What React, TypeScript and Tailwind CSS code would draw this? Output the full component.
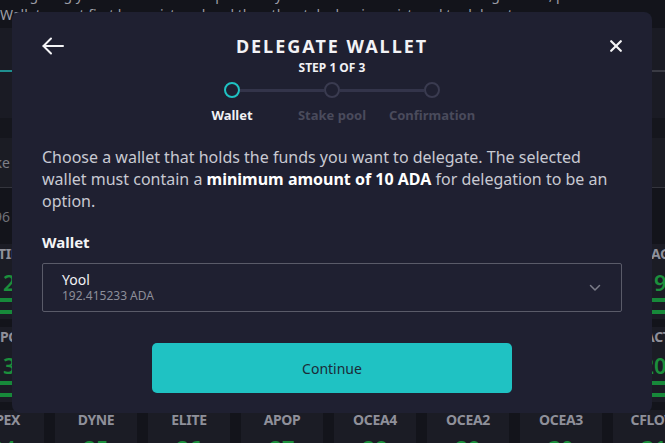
import React from "react";

const font = { fontFamily: '"Noto Sans", "Open Sans", sans-serif' };

type Tile = { label: string; num: string };

const rows: Tile[][] = [
  [
    { label: "UTIL", num: "12" },
    { label: "BLOOM", num: "13" },
    { label: "NORTH", num: "14" },
    { label: "KILN", num: "15" },
    { label: "OCEA1", num: "16" },
    { label: "STAR", num: "17" },
    { label: "HYPE", num: "18" },
    { label: "MAG", num: "19" },
  ],
  [
    { label: "NPC", num: "13" },
    { label: "WAVE", num: "14" },
    { label: "ZEN", num: "15" },
    { label: "CRUX", num: "16" },
    { label: "ATOM", num: "17" },
    { label: "EVE", num: "18" },
    { label: "LION", num: "19" },
    { label: "PACT", num: "20" },
  ],
  [
    { label: "APEX", num: "24" },
    { label: "DYNE", num: "25" },
    { label: "ELITE", num: "26" },
    { label: "APOP", num: "27" },
    { label: "OCEA4", num: "28" },
    { label: "OCEA2", num: "29" },
    { label: "OCEA3", num: "30" },
    { label: "CFLOW", num: "31" },
  ],
];

function PoolTile({ tile, bars }: { tile: Tile; bars: boolean }) {
  return (
    <div className="h-[75px] bg-[#1b1c25] flex flex-col items-center pt-[1px]">
      <span className="text-[14px] leading-[18px] font-bold text-[#8f909a] tracking-tight">{tile.label}</span>
      <span className="mt-[6px] text-[22px] leading-[26px] font-semibold text-[#1b8f3c]">{tile.num}</span>
      {bars && (
        <div className="w-full mt-[3px] flex flex-col gap-[8px]">
          <div className="h-[4px] bg-[#17893a]" />
          <div className="h-[4px] bg-[#17893a]" />
        </div>
      )}
    </div>
  );
}

function Background() {
  return (
    <div className="w-[665px] h-[443px] overflow-hidden bg-[#13141b]">
      <div className="h-[28px] overflow-hidden">
        <p className="-mt-[15px] text-[14px] leading-[20px] text-[#9d9ea6] whitespace-nowrap">
          Delegating your stake to a stake pool lets you earn rewards without running a node, pools set their own fees and policy
          <br />
          Wallets must first be registered and then the stake key is registered to delegate.
        </p>
      </div>
      <div className="h-[90px] bg-[#1a1b24] flex flex-col">
        <div className="h-[42px]" />
        <div className="flex h-[2px]">
          <div className="w-[120px] bg-[#1f8f8f]" />
          <div className="flex-1 bg-[#3a3b44]" />
        </div>
      </div>
      <div className="h-[20px] bg-[#15161d]" />
      <div className="h-[50px] bg-[#1b1c24] border-b border-[#34353d] flex items-center">
        <span className="-ml-[26px] text-[14px] text-[#7d7e86]">Stake pools</span>
      </div>
      <div className="h-[56px] flex items-center">
        <span className="-ml-[22px] text-[14px] text-[#6f7078]">1296 pools</span>
      </div>
      <div className="-ml-[38px] flex flex-col gap-[8px]">
        {rows.map((row, i) => (
          <div key={i} className="grid grid-cols-[repeat(8,82px)] gap-[11px]">
            {row.map((t) => (
              <PoolTile key={t.label} tile={t} bars={i < 2} />
            ))}
          </div>
        ))}
      </div>
    </div>
  );
}

function Stepper() {
  const labels = ["Wallet", "Stake pool", "Confirmation"];
  return (
    <div className="flex flex-col items-center">
      <div className="mt-[6px] flex items-center">
        <div className="w-[16px] h-[16px] rounded-full border-2 border-[#1fc2c3]" />
        <div className="w-[84px] h-[3px] bg-[#33344a]" />
        <div className="w-[16px] h-[16px] rounded-full border-2 border-[#3a3b50]" />
        <div className="w-[84px] h-[3px] bg-[#33344a]" />
        <div className="w-[16px] h-[16px] rounded-full border-2 border-[#3a3b50]" />
      </div>
      <div className="mt-[8px] flex">
        {labels.map((l, i) => (
          <span
            key={l}
            className={`w-[100px] text-center text-[13px] leading-[18px] font-bold ${i === 0 ? "text-[#f1f1f4]" : "text-[#4a4b5c]"}`}
          >
            {l}
          </span>
        ))}
      </div>
    </div>
  );
}

function DelegateModal() {
  return (
    <div className="absolute left-[12px] top-[12px] w-[640px] h-[401px] rounded-[8px] bg-[#1f2031] px-[30px] pt-[22px] text-white" style={font}>
      <div className="grid grid-cols-[1fr_auto_1fr] items-center h-[24px]">
        <svg width="22" height="18" viewBox="0 0 22 18" fill="none" stroke="#f4f4f6" strokeWidth="2" strokeLinecap="round" strokeLinejoin="round">
          <path d="M21 9H1.5" />
          <path d="M9 1.5L1.5 9L9 16.5" />
        </svg>
        <h1 className="text-[18px] leading-[24px] font-bold tracking-[0.11em] text-[#f2f2f5]">DELEGATE WALLET</h1>
        <div className="flex justify-end">
          <svg width="12" height="12" viewBox="0 0 12 12" fill="none" stroke="#f4f4f6" strokeWidth="2.2" strokeLinecap="round">
            <path d="M1.2 1.2L10.8 10.8M10.8 1.2L1.2 10.8" />
          </svg>
        </div>
      </div>
      <p className="mt-[2px] text-center text-[12px] leading-[16px] font-bold text-[#f1f1f4]">STEP 1 OF 3</p>
      <Stepper />
      <p className="mt-[22px] text-[16px] leading-[22px] text-[#c8c9d2]">
        Choose a wallet that holds the funds you want to delegate. The selected wallet must contain a{" "}
        <span className="font-bold text-white">minimum amount of 10 ADA</span> for delegation to be an option.
      </p>
      <p className="mt-[20px] text-[15px] leading-[20px] font-bold text-[#f4f4f6]">Wallet</p>
      <div className="mt-[11px] h-[49px] border border-[#5a5b69] rounded-[2px] flex items-center justify-between pl-[19px] pr-[20px]">
        <div className="flex flex-col">
          <span className="text-[14px] leading-[17px] text-[#f1f1f4]">Yool</span>
          <span className="text-[12px] leading-[16px] text-[#8d8e99]">192.415233 ADA</span>
        </div>
        <svg width="12" height="8" viewBox="0 0 12 8" fill="none" stroke="#7c7d89" strokeWidth="1.5" strokeLinecap="round" strokeLinejoin="round">
          <path d="M1.5 1.5L6 6L10.5 1.5" />
        </svg>
      </div>
      <button className="mt-[31px] mx-auto flex items-center justify-center w-[360px] h-[50px] rounded-[5px] bg-[#1fc2c3] text-[14px] text-[#1c2b37]">
        Continue
      </button>
    </div>
  );
}

export default function App() {
  return (
    <div className="relative w-[665px] h-[443px] overflow-hidden" style={font}>
      <Background />
      <DelegateModal />
    </div>
  );
}
